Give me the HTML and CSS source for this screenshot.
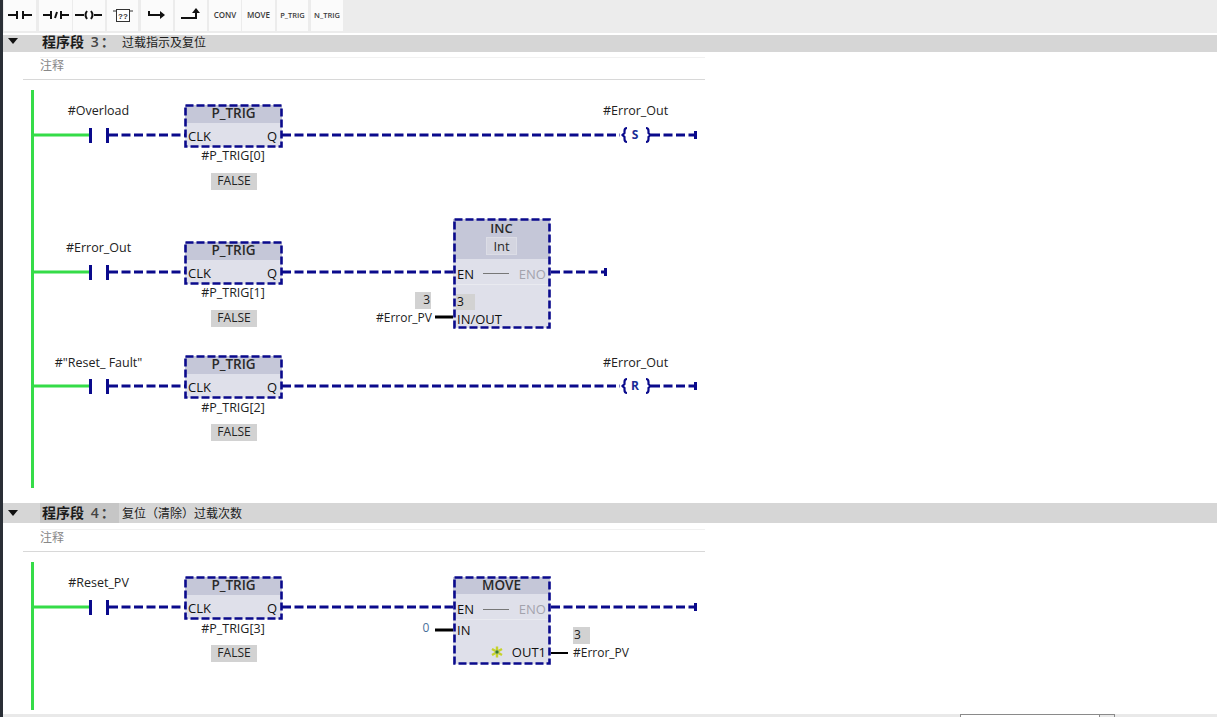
FILE: index.html
```html
<!DOCTYPE html>
<html lang="zh">
<head>
<meta charset="utf-8">
<title>程序段</title>
<link rel="stylesheet" href="styles.css">
</head>
<body>
<div class="app">
  <div class="strip"></div>
  <div class="toolbar">
    <div class="tool t1"><svg width="24" height="12" viewBox="0 0 24 12"><path d="M0 6h9M9 2v8M15 2v8M15 6h9" class="ti"/></svg></div>
    <div class="tool t2"><svg width="26" height="12" viewBox="0 0 26 12"><path d="M0 6h8M8 2v8M12 9l2-6M18 2v8M18 6h8" class="ti"/></svg></div>
    <div class="tool t3"><svg width="28" height="12" viewBox="0 0 28 12"><path d="M0 6h9M27 6h-8M12 2q-3 4 0 8M16 2q3 4 0 8" class="ti"/></svg></div>
    <div class="tool t4"><svg width="20" height="16" viewBox="0 0 20 16"><rect x="3.500" y="2.500" width="13" height="12" class="tbox"/><path d="M0 4h3M17 4h3" class="tthin"/><text x="10" y="11.500" class="tq">??</text></svg></div>
    <div class="tool t5"><svg width="18" height="12" viewBox="0 0 18 12"><path d="M1 2v4h14" class="ti"/><path d="M12 2l5 4-5 4z" class="ta"/></svg></div>
    <div class="tool t6"><svg width="20" height="14" viewBox="0 0 20 14"><path d="M0 10h15V4" class="ti"/><path d="M11 5l4-5 4 5z" class="ta"/></svg></div>
    <div class="tool t7">CONV</div>
    <div class="tool t8">MOVE</div>
    <div class="tool t9">P_TRIG</div>
    <div class="tool t10">N_TRIG</div>
  </div>

  <section class="network">
    <header class="net-head h3">
      <span class="caret"></span>
      <span class="net-title">程序段 <span class="num">3：</span></span>
      <span class="net-desc">过载指示及复位</span>
    </header>
    <div class="comment"><span>注释</span></div>
    <div class="canvas c3">
      <div class="rail"></div>

      <div class="rung r1">
        <div class="tag contact-tag">#Overload</div>
        <div class="block ptrig"><div class="b-head">P_TRIG</div><div class="b-body"><span>CLK</span><span>Q</span></div></div>
        <div class="tag inst">#P_TRIG[0]</div>
        <div class="val false">FALSE</div>
        <div class="tag coil-tag">#Error_Out</div>
        <div class="coil-letter">S</div>
        <svg class="wires" width="705" height="120">
          <path class="green" d="M32 40H89"/>
          <path class="bar" d="M90.500 33v15M107.500 33v15"/>
          <path class="dash" d="M109 40H185M282 40H620"/>
          <rect class="outline" x="185.500" y="10.500" width="96" height="41"/>
          <path class="brace" d="M627 33q-2.500 0-2.500 3v2l-2 2 2 2v2q0 3 2.500 3M646 33q2.500 0 2.500 3v2l2 2-2 2v2q0 3-2.500 3"/>
          <path class="dash" d="M651 40H695"/>
          <path class="bar" d="M695.500 36v8"/>
        </svg>
      </div>

      <div class="rung r2">
        <div class="tag contact-tag">#Error_Out</div>
        <div class="block ptrig"><div class="b-head">P_TRIG</div><div class="b-body"><span>CLK</span><span>Q</span></div></div>
        <div class="tag inst">#P_TRIG[1]</div>
        <div class="val false">FALSE</div>
        <div class="block inc">
          <div class="b-head"><span>INC</span><span class="type">Int</span></div>
          <div class="b-body col">
            <div class="en-row"><span>EN</span><i class="en-link"></i><span class="eno">ENO</span></div>
            <div class="io-val">3</div>
            <div class="io-name">IN/OUT</div>
          </div>
        </div>
        <div class="val param-val">3</div>
        <div class="tag param-name">#Error_PV</div>
        <svg class="wires" width="705" height="120">
          <path class="green" d="M32 40H89"/>
          <path class="bar" d="M90.500 33v15M107.500 33v15"/>
          <path class="dash" d="M109 40H185M282 40H453M551 40H605"/>
          <rect class="outline" x="185.500" y="10.500" width="96" height="41"/>
          <rect class="outline" x="454.500" y="-12.500" width="95" height="108"/>
          <path class="bar" d="M605.500 36v8"/>
          <path class="black" d="M435 85H453"/>
        </svg>
      </div>

      <div class="rung r3">
        <div class="tag contact-tag">#"Reset_ Fault"</div>
        <div class="block ptrig"><div class="b-head">P_TRIG</div><div class="b-body"><span>CLK</span><span>Q</span></div></div>
        <div class="tag inst">#P_TRIG[2]</div>
        <div class="val false">FALSE</div>
        <div class="tag coil-tag">#Error_Out</div>
        <div class="coil-letter">R</div>
        <svg class="wires" width="705" height="120">
          <path class="green" d="M32 40H89"/>
          <path class="bar" d="M90.500 33v15M107.500 33v15"/>
          <path class="dash" d="M109 40H185M282 40H620"/>
          <rect class="outline" x="185.500" y="10.500" width="96" height="41"/>
          <path class="brace" d="M627 33q-2.500 0-2.500 3v2l-2 2 2 2v2q0 3 2.500 3M646 33q2.500 0 2.500 3v2l2 2-2 2v2q0 3-2.500 3"/>
          <path class="dash" d="M651 40H695"/>
          <path class="bar" d="M695.500 36v8"/>
        </svg>
      </div>
    </div>
  </section>

  <section class="network">
    <header class="net-head h4">
      <span class="caret"></span>
      <span class="net-title mark">程序段 <span class="num">4：</span></span>
      <span class="net-desc">复位（清除）过载次数</span>
    </header>
    <div class="comment"><span>注释</span></div>
    <div class="canvas c4">
      <div class="rail"></div>
      <div class="rung r4">
        <div class="tag contact-tag">#Reset_PV</div>
        <div class="block ptrig"><div class="b-head">P_TRIG</div><div class="b-body"><span>CLK</span><span>Q</span></div></div>
        <div class="tag inst">#P_TRIG[3]</div>
        <div class="val false">FALSE</div>
        <div class="block move">
          <div class="b-head">MOVE</div>
          <div class="b-body col">
            <div class="en-row"><span>EN</span><i class="en-link"></i><span class="eno">ENO</span></div>
            <div class="in-row">IN</div>
            <div class="out-row">
              <svg class="star" width="12" height="12" viewBox="0 0 12 12"><path d="M6 .5v4M6 7.500v4M1 3l3.500 2M7.500 7l3.500 2M1 9l3.500-2M7.500 5L11 3"/><circle cx="6" cy="6" r="1.800"/></svg>
              <span>OUT1</span>
            </div>
          </div>
        </div>
        <div class="lit">0</div>
        <div class="val out-val">3</div>
        <div class="tag out-name">#Error_PV</div>
        <svg class="wires" width="705" height="120">
          <path class="green" d="M32 40H89"/>
          <path class="bar" d="M90.500 33v15M107.500 33v15"/>
          <path class="dash" d="M109 40H185M282 40H453M551 40H694"/>
          <rect class="outline" x="185.500" y="10.500" width="96" height="41"/>
          <rect class="outline" x="454.500" y="10.500" width="95" height="86"/>
          <path class="bar" d="M695.500 36v8"/>
          <path class="black" d="M435 63H453"/>
          <path class="black thin" d="M551 86H568"/>
        </svg>
      </div>
    </div>
  </section>

  <footer class="status"><div class="status-box"><i></i></div></footer>
</div>
</body>
</html>
```
FILE: styles.css
```css
* { box-sizing: border-box; }
html, body { margin: 0; padding: 0; }
body {
  width: 1217px;
  height: 717px;
  overflow: hidden;
  background: #fff;
  font-family: "Open Sans", "Noto Sans CJK SC", sans-serif;
  color: #222;
}
.app { position: relative; width: 1217px; height: 717px; display: flex; flex-direction: column; overflow: hidden; }
.strip { position: absolute; left: 0; top: 0; bottom: 0; width: 3px; background: #2a2f36; z-index: 5; }

/* toolbar */
.toolbar { height: 33px; background: #ececec; display: flex; padding-left: 4px; flex: none; }
.tool {
  height: 31px;
  padding-bottom: 2px;
  background: #fbfbfb;
  display: flex;
  align-items: center;
  justify-content: center;
  font-size: 8px;
  font-weight: 600;
  color: #3a3a3a;
  white-space: nowrap;
}
.t1 { width: 32px; margin-right: 3px; }
.t2 { width: 33px; margin-right: 1px; }
.t3 { width: 32px; margin-right: 2px; }
.t4 { width: 31px; margin-right: 3px; }
.t5 { width: 32px; margin-right: 2px; }
.t6 { width: 32px; margin-right: 2px; }
.t7 { width: 32px; margin-right: 1px; }
.t8 { width: 33px; margin-right: 2px; }
.t9 { width: 31px; margin-right: 3px; font-size: 7.500px; }
.t10 { width: 32px; font-size: 7.500px; }
.ti { fill: none; stroke: #111; stroke-width: 2; }
.ta { fill: #111; }
.tbox { fill: #fff; stroke: #333; stroke-width: 1; }
.tthin { stroke: #333; stroke-width: 1; fill: none; }
.tq { font-size: 8px; font-family: "Liberation Sans", sans-serif; text-anchor: middle; fill: #333; }

/* network header */
.net-head { margin-left: 3px; background: #d6d6d6; display: flex; align-items: center; position: relative; flex: none; font-size: 12px; color: #1c1c1c; }
.h3 { height: 17px; margin-top: 2px; padding-bottom: 4px; }
.h4 { height: 20px; padding-bottom: 1px; }
.caret { position: absolute; left: 5px; top: 3px; width: 0; height: 0; border-left: 5px solid transparent; border-right: 5px solid transparent; border-top: 6px solid #111; }
.h4 .caret { top: 7px; }
.net-title { margin-left: 39px; width: 80px; font-weight: 700; font-size: 14px; line-height: 17px; white-space: pre; }
.num { font-weight: 600; color: #444; margin-left: 3px; letter-spacing: 2px; }
.mark { background: #c6c6c6; margin-left: 37px; padding-left: 2px; width: 79px; margin-right: 3px; height: 20px; line-height: 19px; }
.net-desc { white-space: nowrap; }
.comment { height: 23px; margin-top: 5px; margin-left: 23px; width: 682px; border-bottom: 1px solid #d8d8d8; padding-left: 17px; font-size: 12px; color: #888; line-height: 16px; flex: none; }
.h4 + .comment { margin-top: 6px; }
.comment span { display: block; border-top: 1px solid #f1f1f1; }

/* ladder canvas */
.canvas { position: relative; flex: none; padding-top: 15px; }
.c3 { height: 423px; }
.c4 { height: 162px; }
.rail { position: absolute; left: 31px; top: 10px; bottom: 15px; width: 3px; background: #35dc48; }
.c4 .rail { bottom: 4px; }
.rung { position: relative; width: 705px; }
.r1 { height: 137px; }
.r2 { height: 114px; }
.r3, .r4 { height: 120px; }
.wires { position: absolute; left: 0; top: 0; overflow: visible; z-index: 2; pointer-events: none; }
.green { stroke: #35dc48; stroke-width: 3; fill: none; }
.bar { stroke: #0a0a8c; stroke-width: 3; fill: none; }
.dash { stroke: #0a0a8c; stroke-width: 3; fill: none; stroke-dasharray: 9 3.500; }
.outline { fill: none; stroke: #0a0a8c; stroke-width: 2.600; stroke-dasharray: 8 3; }
.brace { fill: none; stroke: #0a0a8c; stroke-width: 2.200; }
.black { stroke: #000; stroke-width: 3; fill: none; }
.thin { stroke-width: 2; }

.tag { position: absolute; font-size: 12.500px; line-height: 16px; color: #222; white-space: nowrap; }
.contact-tag { left: 0; width: 197px; text-align: center; top: 8px; }
.r3 .contact-tag, .r3 .coil-tag { top: 9px; }
.inst { left: 185px; width: 96px; text-align: center; top: 53px; }
.r3 .inst, .r4 .inst { top: 54px; }
.coil-tag { left: 603px; top: 8px; }
.coil-letter { position: absolute; left: 625px; width: 20px; text-align: center; top: 32px; font-size: 12px; font-weight: 700; line-height: 16px; color: #1a2c96; }

.val { position: absolute; background: #d2d2d2; font-size: 12px; line-height: 16px; text-align: center; color: #222; }
.false { left: 211px; top: 78px; width: 46px; height: 17px; }
.param-val { left: 415px; top: 60px; width: 16px; height: 17px; text-align: right; padding-right: 1px; }
.param-name { right: 273px; top: 78px; font-size: 12px; }
.out-val { left: 573px; top: 60px; width: 17px; height: 17px; text-align: left; padding-left: 1px; }
.out-name { left: 573px; top: 78px; font-size: 12px; }
.lit { position: absolute; left: 420px; top: 53px; width: 12px; text-align: center; font-size: 12px; line-height: 16px; color: #4a6f9a; }

/* blocks */
.block { position: absolute; background: #dfe0ea; color: #111; font-size: 13px; display: flex; flex-direction: column; }
.ptrig { left: 185px; top: 10px; width: 97px; height: 42px; }
.b-head { background: #c5c7d8; height: 18px; line-height: 16px; text-align: center; font-weight: 600; color: #2a2a2a; flex: none; font-size: 13.500px; }
.b-body { display: flex; justify-content: space-between; padding: 4px 5px 0 3px; line-height: 18px; flex: 1; }
.b-body.col { flex-direction: column; justify-content: flex-start; padding: 0; position: relative; }
.inc { left: 453px; top: -13px; width: 97px; height: 109px; }
.inc .b-head { height: 40px; display: flex; flex-direction: column; align-items: center; line-height: 17px; padding-top: 1px; font-size: 13px; }
.type { background: #d4d5e0; padding: 0 6px; line-height: 16px; border: 1px solid #dcdde6; font-weight: 500; }
.move { left: 453px; top: 10px; width: 97px; height: 87px; }
.move .b-head { height: 17px; line-height: 16px; }
.en-row { display: flex; align-items: center; padding: 0 4px 0 4px; height: 22px; margin-top: 4px; flex: none; border-bottom: 1px solid #e9eaf0; }
.move .en-row { margin-top: 5px; height: 21px; }
.en-link { display: block; width: 26px; height: 1px; background: #777; margin: 0 auto; }
.eno { color: #a3a3ad; }
.io-val { position: absolute; left: 3px; top: 35px; width: 19px; height: 16px; background: #d2d2d2; line-height: 16px; padding-left: 1px; font-size: 12px; }
.io-name { position: absolute; left: 4px; top: 52px; line-height: 17px; }
.in-row { padding-left: 4px; line-height: 20px; }
.out-row { display: flex; justify-content: flex-end; align-items: center; gap: 9px; padding-right: 4px; line-height: 18px; margin-top: 3px; }
.star { stroke: #c6d22c; stroke-width: 2.400; fill: #3b7a2a; }
.star circle { stroke: none; }

/* footer */
.status { position: relative; height: 3px; background: #e9e9e9; flex: none; }
.status-box { position: absolute; left: 960px; top: 0; width: 155px; height: 3px; background: #fff; border: 1px solid #8a8a8a; border-bottom: 0; }
.status-box i { position: absolute; right: 0; top: 0; width: 15px; height: 2px; background: #e9e9e9; border-left: 1px solid #8a8a8a; }
```
